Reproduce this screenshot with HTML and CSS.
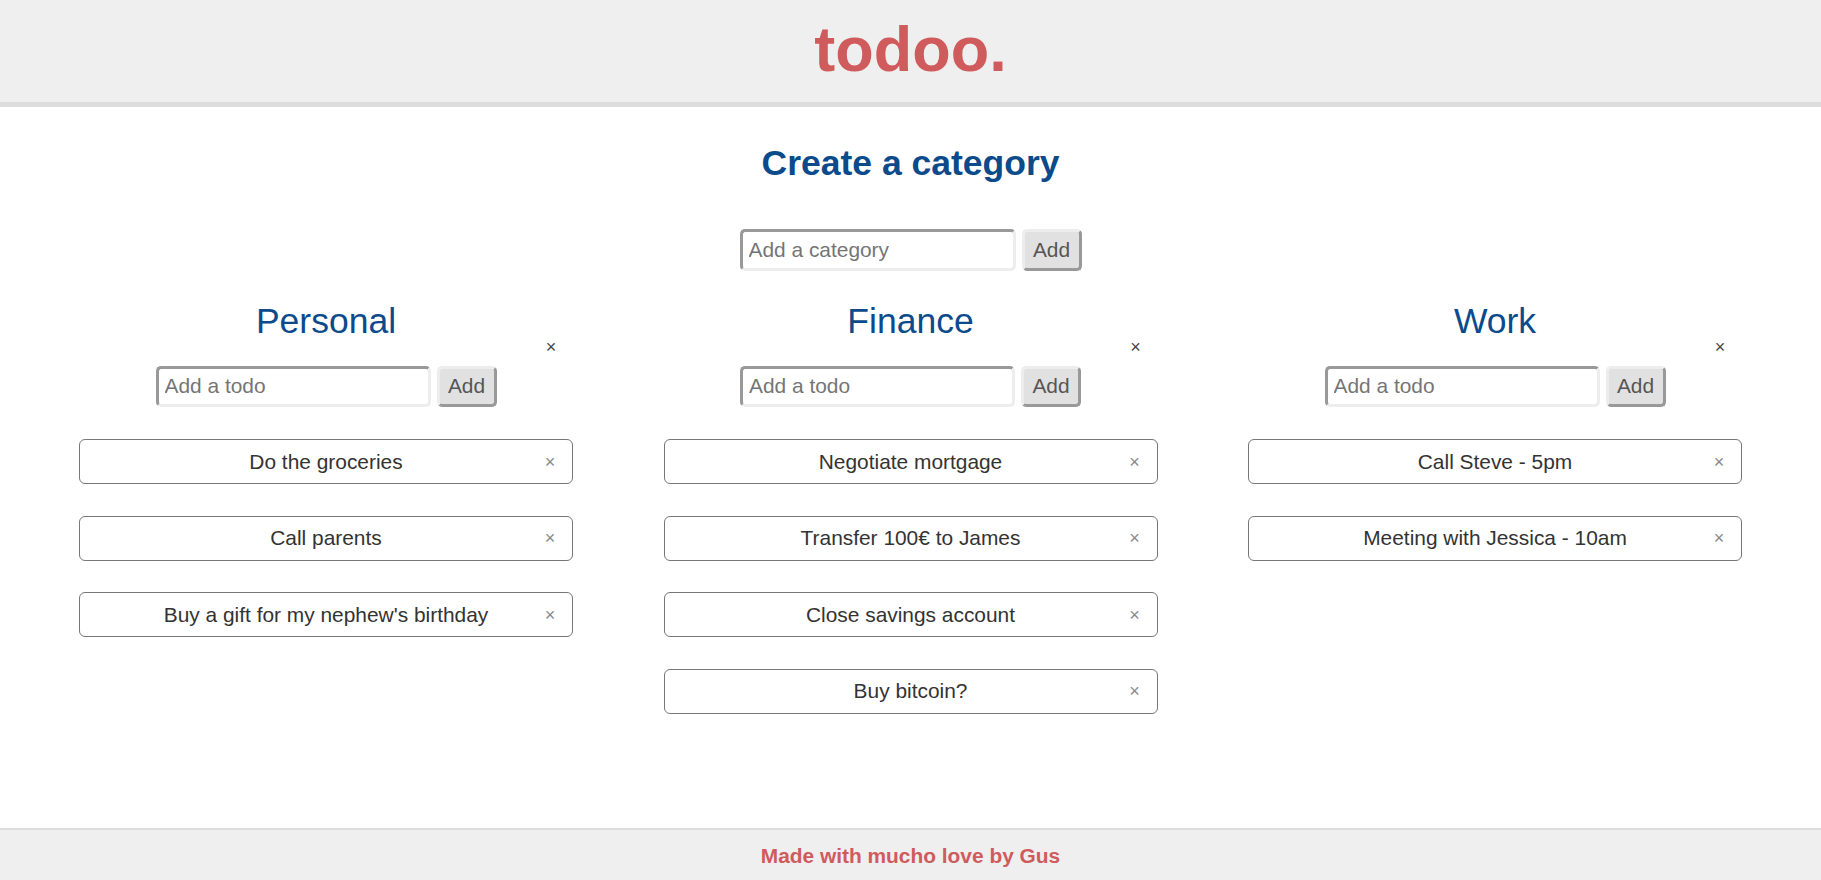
FILE: index.html
```html
<!DOCTYPE html>
<html lang="en">
<head>
<meta charset="utf-8">
<title>todoo.</title>
<link rel="stylesheet" href="styles.css">
</head>
<body>
<header class="topbar">
  <h1 class="logo">todoo.</h1>
</header>
<main class="main">
  <h2 class="create-title">Create a category</h2>
  <form class="add-form cat-form">
    <input class="add-input cat-input" type="text" placeholder="Add a category">
    <button class="add-btn cat-btn" type="button">Add</button>
  </form>
  <section class="columns">
    <div class="column">
      <h3 class="col-title">Personal</h3>
      <span class="col-close">×</span>
      <form class="add-form todo-form">
        <input class="add-input todo-input" type="text" placeholder="Add a todo">
        <button class="add-btn todo-btn" type="button">Add</button>
      </form>
      <ul class="todo-list">
        <li class="todo">Do the groceries<span class="todo-close">×</span></li>
        <li class="todo">Call parents<span class="todo-close">×</span></li>
        <li class="todo">Buy a gift for my nephew's birthday<span class="todo-close">×</span></li>
      </ul>
    </div>
    <div class="column">
      <h3 class="col-title">Finance</h3>
      <span class="col-close">×</span>
      <form class="add-form todo-form">
        <input class="add-input todo-input" type="text" placeholder="Add a todo">
        <button class="add-btn todo-btn" type="button">Add</button>
      </form>
      <ul class="todo-list">
        <li class="todo">Negotiate mortgage<span class="todo-close">×</span></li>
        <li class="todo">Transfer 100€ to James<span class="todo-close">×</span></li>
        <li class="todo">Close savings account<span class="todo-close">×</span></li>
        <li class="todo">Buy bitcoin?<span class="todo-close">×</span></li>
      </ul>
    </div>
    <div class="column">
      <h3 class="col-title">Work</h3>
      <span class="col-close">×</span>
      <form class="add-form todo-form">
        <input class="add-input todo-input" type="text" placeholder="Add a todo">
        <button class="add-btn todo-btn" type="button">Add</button>
      </form>
      <ul class="todo-list">
        <li class="todo">Call Steve - 5pm<span class="todo-close">×</span></li>
        <li class="todo">Meeting with Jessica - 10am<span class="todo-close">×</span></li>
      </ul>
    </div>
  </section>
</main>
<footer class="footer">Made with mucho love by Gus</footer>
</body>
</html>
```

FILE: styles.css
```css
* { box-sizing: border-box; }

html, body { height: 100%; }

body {
  margin: 0;
  min-height: 100vh;
  display: flex;
  flex-direction: column;
  font-family: "Liberation Sans", Arial, sans-serif;
  background: #ffffff;
  color: #333333;
}

.topbar {
  height: 107px;
  background: #efefef;
  border-bottom: 5px solid #dddddd;
  display: flex;
  justify-content: center;
  padding-top: 13px;
}

.logo {
  margin: 0;
  font-size: 63px;
  line-height: 1.15;
  font-weight: bold;
  color: #d05b5d;
}

.main {
  flex: 1;
  display: flex;
  flex-direction: column;
  align-items: center;
}

.create-title {
  margin: 36px 0 0;
  font-size: 35.5px;
  line-height: 1.15;
  font-weight: bold;
  color: #0b4a8b;
}

.add-form {
  display: flex;
  justify-content: center;
  gap: 6px;
  margin: 0;
}

.cat-form { margin-top: 45px; height: 42px; }
.todo-form { margin-top: 24px; height: 41px; }

.add-input {
  height: 100%;
  border-width: 3px;
  border-style: solid;
  border-color: #999999 #ededed #ededed #999999;
  border-radius: 5px;
  padding: 0 6px;
  font-family: "Liberation Sans", Arial, sans-serif;
  font-size: 20.9px;
  color: #333333;
  background: #ffffff;
  outline: none;
}

.add-input::placeholder { color: #757575; }

.cat-input { width: 276px; }
.todo-input { width: 275px; }

.add-btn {
  width: 60px;
  height: 100%;
  border-width: 3px;
  border-style: solid;
  border-color: #ededed #999999 #999999 #ededed;
  border-radius: 5px;
  background: #e1e1e1;
  padding: 0;
  font-family: "Liberation Sans", Arial, sans-serif;
  font-size: 20.9px;
  color: #555555;
}

.columns {
  align-self: stretch;
  display: flex;
  justify-content: space-between;
  padding: 0 79px;
  margin-top: 30px;
}

.column {
  width: 494px;
  position: relative;
  display: flex;
  flex-direction: column;
}

.col-title {
  margin: 0;
  text-align: center;
  font-size: 35.5px;
  line-height: 1.15;
  font-weight: normal;
  color: #0b4a8b;
}

.col-close {
  position: absolute;
  top: 36px;
  right: 14px;
  width: 16px;
  text-align: center;
  font-size: 18px;
  line-height: 20px;
  color: #444444;
}

.todo-list {
  list-style: none;
  margin: 32.5px 0 0;
  padding: 0;
  display: flex;
  flex-direction: column;
  gap: 31.5px;
}

.todo {
  position: relative;
  height: 45px;
  border: 1px solid #777777;
  border-radius: 6px;
  display: flex;
  align-items: center;
  justify-content: center;
  font-size: 20.9px;
  color: #333333;
}

.todo-close {
  position: absolute;
  right: 14px;
  top: 50%;
  transform: translateY(-50%);
  width: 16px;
  text-align: center;
  font-size: 18px;
  line-height: 20px;
  color: #888888;
}

.footer {
  height: 52px;
  border-top: 2px solid #dddddd;
  background: #efefef;
  display: flex;
  align-items: center;
  justify-content: center;
  padding-top: 2px;
  font-size: 20.9px;
  font-weight: bold;
  color: #cf5b5d;
}
```
